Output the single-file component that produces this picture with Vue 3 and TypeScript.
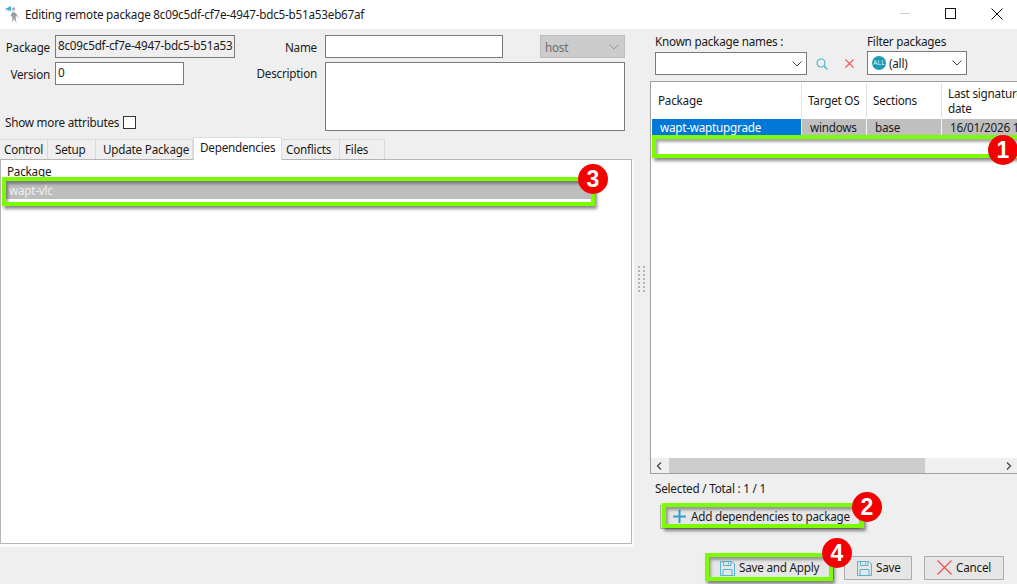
<script setup lang="ts">
const tabs = ['Control', 'Setup', 'Update Package', 'Dependencies', 'Conflicts', 'Files']
const marks = [1, 2, 3, 4]
</script>

<template>
  <div class="window">
    <header class="titlebar">
      <svg class="appicon" width="18" height="18" viewBox="0 0 18 18">
        <path d="M9 6.500l3 2 3 5-2.500-2.500-1 1 1 6-2.500-4-2 3.500 .5-5-2-2.500z" fill="#9aa0aa" />
        <circle cx="9.500" cy="4" r="1.700" fill="#a7acb5" />
        <path d="M1 4l6-3v5z" fill="#3fa9cf" />
        <path d="M1 4l5 1-1 2z" fill="#9fd5e6" />
      </svg>
      <span class="title">Editing remote package 8c09c5df-cf7e-4947-bdc5-b51a53eb67af</span>
      <div class="controls">
        <span class="minimize"></span>
        <span class="maximize"></span>
        <svg width="12" height="12" viewBox="0 0 12 12"><path d="M.5.5l11 11M11.500.5l-11 11" stroke="#111" fill="none" /></svg>
      </div>
    </header>

    <main class="body">
      <section class="left">
        <div class="form">
          <div class="form-col">
            <div class="field">
              <label class="lbl">Package</label>
              <div class="input readonly">8c09c5df-cf7e-4947-bdc5-b51a53</div>
            </div>
            <div class="field">
              <label class="lbl">Version</label>
              <div class="input version">0</div>
            </div>
            <div class="more">
              <span>Show more attributes</span>
              <span class="check"></span>
            </div>
          </div>
          <div class="form-col2">
            <div class="field">
              <label class="lbl2">Name</label>
              <div class="input name"></div>
              <div class="select-disabled">
                <span>host</span>
                <svg width="10" height="6" viewBox="0 0 10 6"><path d="M.5.5L5 5 9.500.5" fill="none" stroke="#999" /></svg>
              </div>
            </div>
            <div class="field top">
              <label class="lbl2">Description</label>
              <div class="textarea"></div>
            </div>
          </div>
        </div>

        <nav class="tabs">
          <span v-for="t in tabs" :key="t" class="tab" :class="{ active: t === 'Dependencies' }">{{ t }}</span>
        </nav>
        <div class="panel">
          <div class="panel-head">Package</div>
          <div class="dep-row">wapt-vlc</div>
        </div>
      </section>

      <div class="splitter"><span class="grip"></span></div>

      <section class="right">
        <div class="filters">
          <div class="known">
            <label class="cap">Known package names :</label>
            <div class="known-line">
              <div class="combo">
                <svg width="10" height="6" viewBox="0 0 10 6"><path d="M.5.500L5 5 9.500.5" fill="none" stroke="#444" /></svg>
              </div>
              <svg class="search" width="12" height="12" viewBox="0 0 12 12"><circle cx="5" cy="5" r="4" fill="none" stroke="#4db4d0" stroke-width="1.200" /><path d="M8 8l3.500 3.500" stroke="#4db4d0" stroke-width="1.500" /></svg>
              <svg class="clear" width="9" height="9" viewBox="0 0 9 9"><path d="M.5.500l8 8M8.500.500l-8 8" stroke="#f0605a" stroke-width="1.200" /></svg>
            </div>
          </div>
          <div class="filter">
            <label class="cap">Filter packages</label>
            <div class="filter-select">
              <span class="all">ALL</span>
              <span>(all)</span>
              <svg width="10" height="6" viewBox="0 0 10 6"><path d="M.5.500L5 5 9.500.5" fill="none" stroke="#444" /></svg>
            </div>
          </div>
        </div>

        <div class="grid">
          <div class="grid-inner">
            <div class="grid-head">
              <div class="hcell c1">Package</div>
              <div class="hcell c2">Target OS</div>
              <div class="hcell c3">Sections</div>
              <div class="hcell c4">Last signature<br />date</div>
            </div>
            <div class="grid-row">
              <div class="cell c1 selected">wapt-waptupgrade</div>
              <div class="cell c2">windows</div>
              <div class="cell c3">base</div>
              <div class="cell c4">16/01/2026 1</div>
            </div>
          </div>
          <div class="hscroll">
            <svg width="6" height="8" viewBox="0 0 6 8"><path d="M5 .5L1.500 4 5 7.500" fill="none" stroke="#444" stroke-width="1.300" /></svg>
            <span class="thumb"></span>
            <svg width="6" height="8" viewBox="0 0 6 8"><path d="M1 .5L4.500 4 1 7.500" fill="none" stroke="#444" stroke-width="1.300" /></svg>
          </div>
        </div>

        <div class="count">Selected / Total : 1 / 1</div>
        <button class="btn add">
          <svg width="15" height="15" viewBox="0 0 15 15"><path d="M7.500 1v13M1 7.500h13" stroke="#2fa0c4" stroke-width="2" /></svg>
          <span>Add dependencies to package</span>
        </button>
      </section>
    </main>

    <footer class="footer">
      <button class="btn apply">
        <svg width="15" height="16" viewBox="0 0 15 16"><path d="M.5 1.500h11.500l2.500 2.500v11.500h-14z M3.500 1.500v4h7.500v-4 M8.500 2.500v2 M3 15.500v-6h9v6" fill="none" stroke="#55b5d3" /></svg>
        <span>Save and Apply</span>
      </button>
      <button class="btn save">
        <svg width="15" height="16" viewBox="0 0 15 16"><path d="M.5 1.500h11.500l2.500 2.500v11.500h-14z M3.500 1.500v4h7.500v-4 M8.500 2.500v2 M3 15.500v-6h9v6" fill="none" stroke="#55b5d3" /></svg>
        <span>Save</span>
      </button>
      <button class="btn cancel">
        <svg width="15" height="15" viewBox="0 0 15 15"><path d="M.5.500l14 14M14.500.500l-14 14" fill="none" stroke="#f0504a" stroke-width="1.200" /></svg>
        <span>Cancel</span>
      </button>
    </footer>

    <span class="hl hl1"></span>
    <span class="hl hl2"></span>
    <span class="hl hl3"></span>
    <span class="hl hl4"></span>
    <span v-for="m in marks" :key="m" class="mark" :class="'m' + m">{{ m }}</span>
  </div>
</template>

<style>
html, body { margin: 0; overflow: hidden; }
</style>

<style scoped>
.window {
  position: relative;
  width: 1017px;
  height: 584px;
  overflow: hidden;
  background: #efefef;
  color: #1a1a1a;
  font-family: "Noto Sans", sans-serif;
  font-size: 11.7px;
  letter-spacing: -0.22px;
  display: flex;
  flex-direction: column;
}
.titlebar {
  height: 29px;
  box-sizing: border-box;
  background: #fff;
  display: flex;
  align-items: center;
  padding: 0 0 2px 4px;
  flex: none;
}
.appicon { margin-right: 3px; }
.controls {
  margin-left: auto;
  display: flex;
  align-items: center;
  gap: 35px;
  padding-right: 14px;
}
.minimize { width: 10px; height: 1px; background: #ccc; }
.maximize { width: 9px; height: 9px; border: 1px solid #111; }

.body { flex: 1; display: flex; min-height: 0; }
.left { width: 632px; display: flex; flex-direction: column; flex: none; }
.form { height: 108px; box-sizing: border-box; display: flex; padding-top: 6px; flex: none; }
.form-col { width: 244px; display: flex; flex-direction: column; gap: 4px; }
.form-col2 { width: 381px; display: flex; flex-direction: column; gap: 4px; }
.field { display: flex; align-items: center; }
.field.top { align-items: flex-start; }
.lbl { width: 50px; text-align: right; margin-right: 5px; }
.lbl2 { width: 73px; text-align: right; margin-right: 8px; }
.field.top .lbl2 { margin-top: 3px; }
.input {
  height: 23px;
  box-sizing: border-box;
  border: 1px solid #7a7a7a;
  background: #fff;
  line-height: 18px;
  padding-left: 2px;
  overflow: hidden;
  white-space: nowrap;
}
.readonly { width: 180px; background: #efefef; }
.version { width: 129px; }
.name { width: 178px; }
.select-disabled {
  width: 85px;
  height: 23px;
  box-sizing: border-box;
  margin-left: 37px;
  border: 1px solid #bdbdbd;
  background: #cccccc;
  color: #6d6d6d;
  display: flex;
  align-items: center;
  justify-content: space-between;
  padding: 0 5px 0 4px;
}
.textarea {
  width: 300px;
  height: 69px;
  box-sizing: border-box;
  border: 1px solid #7a7a7a;
  background: #fff;
}
.more { display: flex; align-items: center; gap: 4px; margin: 25px 0 0 5px; }
.check { width: 11px; height: 11px; border: 1px solid #333; background: #fff; }

.tabs { height: 22px; display: flex; align-items: flex-end; flex: none; }
.tab {
  flex: none;
  height: 20px;
  box-sizing: border-box;
  border-right: 1px solid #dadada;
  border-top: 1px solid #dadada;
  line-height: 18px;
}
.tab:nth-child(1) { width: 48px; padding-left: 4px; }
.tab:nth-child(2) { width: 48px; padding-left: 7px; }
.tab:nth-child(3) { width: 97px; padding-left: 7px; }
.tab:nth-child(5) { width: 58px; padding-left: 4px; }
.tab:nth-child(6) { width: 45px; padding-left: 5px; }
.tab.active {
  width: 89px;
  height: 23px;
  background: #fff;
  border: 1px solid #dadada;
  border-bottom: none;
  padding-left: 6px;
  line-height: 19px;
  margin-bottom: -1px;
  position: relative;
  z-index: 1;
}
.panel {
  flex: 1;
  min-height: 0;
  background: #fff;
  border: 1px solid #b5b5b5;
  box-shadow: 1px 2px 0 1px #fbfbfb;
  margin-bottom: 2px;
  padding-top: 4px;
}
.panel-head { height: 17px; padding-left: 6px; line-height: 15px; }
.dep-row {
  height: 18px;
  margin: 0 37px 0 2px;
  background: #bdbdbd;
  color: #f0f0f0;
  padding-left: 6px;
  line-height: 18px;
}

.splitter { width: 18px; flex: none; display: flex; align-items: center; justify-content: center; }
.grip {
  width: 7px;
  height: 27px;
  margin-top: -16px;
  background-image: radial-gradient(circle at 1px 1px, #b5b5b5 1px, transparent 1.200px);
  background-size: 5px 4px;
}

.right { flex: 1; min-width: 0; display: flex; flex-direction: column; }
.filters { height: 52px; display: flex; padding: 5px 0 0 5px; box-sizing: border-box; flex: none; }
.known { width: 212px; }
.cap { display: block; height: 18px; line-height: 15px; }
.known-line { display: flex; align-items: center; }
.combo {
  width: 152px;
  height: 23px;
  box-sizing: border-box;
  border: 1px solid #7a7a7a;
  background: #fff;
  display: flex;
  align-items: center;
  justify-content: flex-end;
  padding-right: 4px;
}
.search { margin-left: 9px; }
.clear { margin-left: 17px; }
.filter-select {
  width: 100px;
  height: 24px;
  margin-top: -1px;
  box-sizing: border-box;
  border: 1px solid #7a7a7a;
  background: #fff;
  display: flex;
  align-items: center;
  gap: 3px;
  padding: 0 4px;
}
.filter-select svg { margin-left: auto; }
.all {
  width: 14px;
  height: 14px;
  border-radius: 50%;
  background: #1c9bb8;
  color: #d5f1f6;
  font-size: 7px;
  letter-spacing: 0;
  line-height: 14px;
  text-align: center;
}

.grid {
  height: 393px;
  flex: none;
  box-sizing: border-box;
  border: 1px solid #a0a0a0;
  border-right: none;
  background: #fff;
  display: flex;
  flex-direction: column;
}
.grid-inner { flex: 1; overflow: hidden; padding: 1px 0 0 1px; }
.grid-head, .grid-row { display: flex; width: 440px; }
.grid-head { height: 36px; padding-bottom: 2px; box-sizing: border-box; }
.hcell {
  box-sizing: border-box;
  border-right: 1px solid #e3e3e3;
  display: flex;
  align-items: center;
  padding: 0 6px;
  line-height: 15px;
  white-space: nowrap;
}
.hcell.c4 { display: block; padding-top: 3px; }
.grid-row { height: 17px; }
.cell {
  box-sizing: border-box;
  border-right: 1px solid #f5f5f5;
  background: #bfbfbf;
  padding: 0 8px;
  line-height: 17px;
  white-space: nowrap;
}
.c1 { width: 150px; }
.c2 { width: 65px; }
.c3 { width: 75px; }
.c4 { width: 150px; }
.cell.selected { background: #0078d7; color: #fff; }
.hscroll {
  height: 15px;
  background: #efefef;
  display: flex;
  align-items: center;
  justify-content: space-between;
  padding: 0 5px;
  position: relative;
  flex: none;
}
.thumb {
  position: absolute;
  left: 18px;
  width: 256px;
  height: 15px;
  background: #cdcdcd;
}
.count { margin: 6px 0 0 5px; height: 17px; line-height: 17px; }
.btn {
  font: inherit;
  letter-spacing: inherit;
  color: inherit;
  box-sizing: border-box;
  background: #e6e6e6;
  border: 1px solid #adadad;
  display: flex;
  align-items: center;
  padding: 0 0 2px;
}
.add { width: 200px; height: 24px; margin: 8px 0 0 10px; padding-left: 11px; gap: 4px; }
.btn svg { margin-top: 1px; }

.footer {
  height: 38px;
  flex: none;
  display: flex;
  align-items: flex-start;
  padding: 10px 0 0 706px;
  box-sizing: border-box;
}
.apply { width: 128px; height: 24px; padding-left: 13px; gap: 4px; }
.save { width: 68px; height: 24px; margin-left: 10px; padding-left: 12px; gap: 4px; }
.cancel { width: 80px; height: 24px; margin-left: 12px; padding-left: 12px; gap: 4px; }

/* Tutorial annotations laid over the screenshot */
.hl {
  position: absolute;
  box-sizing: border-box;
  border: 4px solid #7cfc00;
  box-shadow: 2px 3px 3px rgba(0, 0, 0, 0.45), inset 2px 3px 3px rgba(0, 0, 0, 0.35);
}
.hl1 { left: 652px; top: 135px; width: 370px; height: 23px; }
.hl2 { left: 662px; top: 503px; width: 202px; height: 25px; }
.hl3 { left: 2px; top: 177px; width: 593px; height: 29px; }
.hl4 { left: 705px; top: 553px; width: 128px; height: 28px; }
.mark {
  position: absolute;
  width: 30px;
  height: 30px;
  border-radius: 50%;
  background: #f40000;
  color: #fff;
  font-family: "Liberation Sans", sans-serif;
  font-weight: 700;
  font-size: 23px;
  letter-spacing: 0;
  line-height: 30px;
  text-align: center;
}
.m1 { left: 988px; top: 135px; }
.m2 { left: 852px; top: 492px; }
.m3 { left: 578px; top: 164px; }
.m4 { left: 822px; top: 538px; }
</style>
